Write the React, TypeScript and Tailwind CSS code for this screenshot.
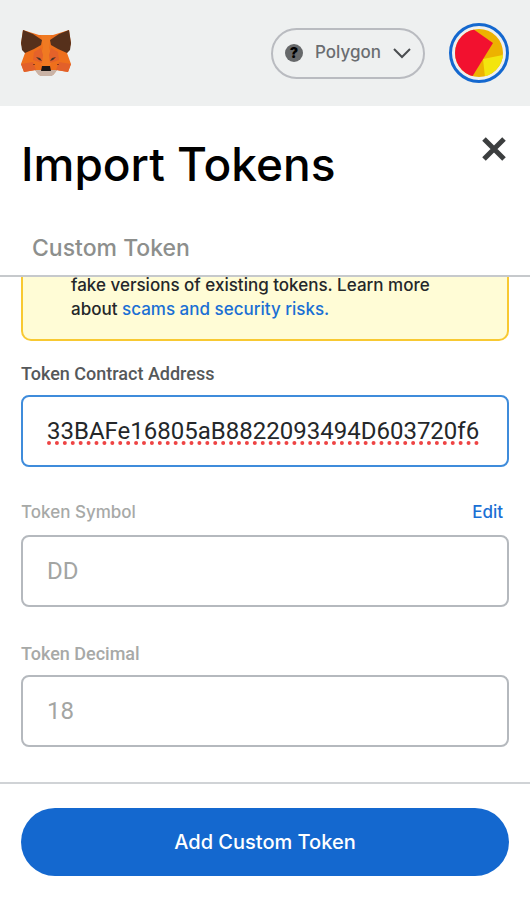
import { useEffect, useRef } from "react";
import type { ReactNode } from "react";

const INPUT_BASE =
  "h-[72px] w-full rounded-lg border-2 bg-white px-6 font-['Roboto',sans-serif] text-2xl outline-none";

function FoxLogo() {
  return (
    <svg width="50" height="48" viewBox="0 0 50 48" aria-label="Wallet home">
      <path
        d="M2 1 18 6h14L48 1l2 14-4 9 4 11-3 8-11-2-4 5H18l-4-5-11 2L0 35l4-11-4-9z"
        fill="#ee6f1c"
      />
      <path d="M20 6 22 19 18 30 21 37h8l3-7-4-11 2-13z" fill="#f07a22" />
      <path d="M20 19 13 23l-1 8 9 3 1-8zM30 19l7 4 1 8-9 3-1-8z" fill="#e4622a" />
      <path d="M0 35 12 33l3 8-12 2zM50 35 38 33l-3 8 12 2z" fill="#e2602a" />
      <path d="M14 41h22l-2 3-3 3H19l-3-3z" fill="#c9b3a6" />
      <path
        d="M2 1 12 5 21 11 20 16 13 20 4 24 1 21 0 14zM48 1 38 5 29 11l1 5 7 4 9 4 3-3 1-7z"
        fill="#56301b"
      />
      <path d="m15 28 4 1 2 3-3-1zM35 28l-4 1-2 3 3-1z" fill="#4a3328" />
      <path d="M12 35h2v1h-2zM36 35h2v1h-2z" fill="#8c3c1c" />
      <path d="M21 37h8l1 5H20z" fill="#1c1817" />
    </svg>
  );
}

function Avatar() {
  return (
    <svg width="48" height="48" viewBox="0 0 48 48" className="shrink-0" aria-hidden="true">
      <clipPath id="avatar">
        <circle cx="24" cy="24" r="24" />
      </clipPath>
      <g clipPath="url(#avatar)">
        <path d="M0 0h48v48H0z" fill="#edb200" />
        <path d="M28 30 48 26v22H30z" fill="#f3e50e" />
        <path d="M0 0h18l20 14-21 34H0z" fill="#f2112f" />
      </g>
    </svg>
  );
}

function Field({
  id,
  label,
  labelClass,
  action,
  children,
}: {
  id: string;
  label: string;
  labelClass: string;
  action?: ReactNode;
  children: ReactNode;
}) {
  return (
    <div>
      <div className="mb-2.5 flex h-6 items-center justify-between">
        <label htmlFor={id} className={labelClass}>
          {label}
        </label>
        {action}
      </div>
      {children}
    </div>
  );
}

export default function App() {
  const addressRef = useRef<HTMLInputElement>(null);

  // keep the end of a long address in view
  useEffect(() => {
    const el = addressRef.current;
    if (el) el.scrollLeft = el.scrollWidth;
  }, []);

  return (
    <div className="flex min-h-screen flex-col bg-white font-['Inter',sans-serif] text-[#24272a]">
      <header className="flex h-[106px] items-center justify-between bg-[#eef0f0] px-[21px]">
        <FoxLogo />
        <div className="flex items-center gap-6">
          <button
            type="button"
            className="flex h-[51px] items-center rounded-full border-2 border-[#b9bbc0] px-3 text-[17px] font-medium text-[#6a6d70]"
          >
            <span className="mr-3 flex size-[18px] items-center justify-center rounded-full bg-[#66686a] text-sm font-black text-black">
              ?
            </span>
            Polygon
            <svg className="ml-3" width="18" height="12" viewBox="0 0 18 12" fill="none">
              <path d="m1 2 8 8 8-8" stroke="#4a4d50" strokeWidth="2" />
            </svg>
          </button>
          <button
            type="button"
            aria-label="Account"
            className="flex size-[60px] items-center justify-center rounded-full border-3 border-[#1468cf]"
          >
            <Avatar />
          </button>
        </div>
      </header>

      <div className="flex items-start justify-between px-[21px] pt-7">
        <h1 className="text-[46px] leading-[60px] font-medium text-black">Import Tokens</h1>
        <button type="button" aria-label="Close">
          <svg width="30" height="30" viewBox="0 0 30 30">
            <path d="M5 5 25 25M25 5 5 25" stroke="#3c3e3f" strokeWidth="5" />
          </svg>
        </button>
      </div>

      <nav className="mt-7 flex h-[55px] items-center border-b-2 border-[#c6c9cc] px-8">
        <button type="button" className="text-[23px] font-medium text-[#8d8f8d]">
          Custom Token
        </button>
      </nav>

      <main className="flex-1 overflow-hidden px-[21px] pb-8">
        <div className="-mt-1 rounded-b-[10px] border-2 border-t-0 border-[#f8c932] bg-[#fffcd6] pr-12 pb-[18px] pl-12 text-[17px] leading-6 font-medium">
          fake versions of existing tokens. Learn more about{" "}
          <a href="#scams" className="text-[#1a6fd4]">
            scams and security risks.
          </a>
        </div>

        <form id="token" className="mt-5 flex flex-col gap-[34px]">
          <Field
            id="address"
            label="Token Contract Address"
            labelClass="font-['Roboto',sans-serif] text-[18px] font-medium text-[#55585a]"
          >
            <input
              id="address"
              ref={addressRef}
              defaultValue="33BAFe16805aB8822093494D603720f6"
              spellCheck={false}
              className={`${INPUT_BASE} border-[#3f8cdb] text-[#24272a] underline decoration-[#ee4444] decoration-dotted decoration-4 underline-offset-2 [text-decoration-skip-ink:none]`}
            />
          </Field>
          <Field
            id="symbol"
            label="Token Symbol"
            labelClass="text-[17px] font-medium text-[#a7a9a7]"
            action={
              <button type="button" className="pr-1.5 text-[17px] font-medium text-[#1a6fd4]">
                Edit
              </button>
            }
          >
            <input
              id="symbol"
              defaultValue="DD"
              className={`${INPUT_BASE} border-[#b5b9be] text-[#a3a5a3]`}
            />
          </Field>
          <Field
            id="decimal"
            label="Token Decimal"
            labelClass="font-['Roboto',sans-serif] text-[18px] font-medium text-[#a7a9a7]"
          >
            <input
              id="decimal"
              defaultValue="18"
              className={`${INPUT_BASE} border-[#b5b9be] text-[#a3a5a3]`}
            />
          </Field>
        </form>
      </main>

      <footer className="border-t-2 border-[#d0d3d6] px-[21px] py-6">
        <button
          type="submit"
          form="token"
          className="h-[68px] w-full rounded-full bg-[#1468cf] text-xl font-medium text-white"
        >
          Add Custom Token
        </button>
      </footer>
    </div>
  );
}
